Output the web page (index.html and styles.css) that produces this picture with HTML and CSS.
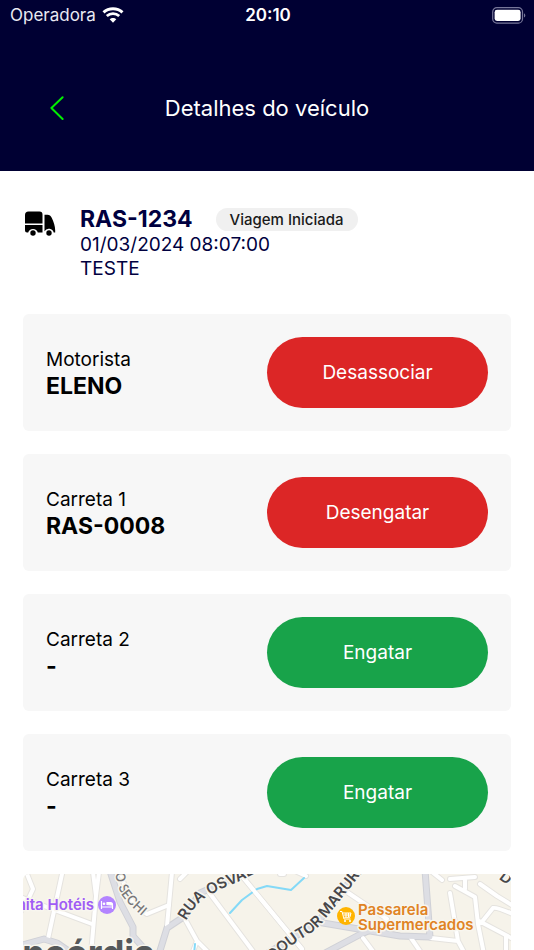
FILE: index.html
```html
<!DOCTYPE html>
<html lang="pt-BR">
<head>
<meta charset="utf-8">
<meta name="viewport" content="width=device-width, initial-scale=1">
<title>Detalhes do veículo</title>
<link rel="stylesheet" href="styles.css">
</head>
<body>
<header class="header">
  <div class="status">
    <div class="carrier">
      <span>Operadora</span>
      <svg class="wifi" viewBox="0 0 22 16" aria-hidden="true">
        <path d="M1.500 5.300C6.800.5 15.200.5 20.500 5.300" fill="none" stroke="#fff" stroke-width="3"/>
        <path d="M4.800 9c3.500-3.200 8.900-3.200 12.400 0" fill="none" stroke="#fff" stroke-width="2.800"/>
        <path d="M7.700 12.300c1.900-1.900 4.700-1.900 6.600 0L11 15.700z" fill="#fff"/>
      </svg>
    </div>
    <time class="clock">20:10</time>
    <svg class="battery" viewBox="0 0 34 17" aria-hidden="true">
      <rect x=".7" y=".7" width="29.800" height="15.400" rx="4.200" fill="none" stroke="#77779a" stroke-width="1.200"/>
      <rect x="2.600" y="2.800" width="26" height="11.200" rx="2.400" fill="#fff"/>
      <path d="M32 6.200c1.800.8 1.800 3.600 0 4.400z" fill="#77779a"/>
    </svg>
  </div>
  <div class="navbar">
    <button class="back" type="button" aria-label="Voltar">
      <svg viewBox="0 0 14 24" aria-hidden="true"><path d="M12.600 1.200 1.400 12l11.200 11" fill="none" stroke="#00f000" stroke-width="2" stroke-linecap="round" stroke-linejoin="round"/></svg>
    </button>
    <h1 class="title">Detalhes do veículo</h1>
  </div>
</header>
<main class="content">
  <section class="vehicle">
    <svg class="truck" viewBox="0 0 31 26" aria-hidden="true">
      <path d="M3.500.5h11a3 3 0 0 1 3 3v9H0V4A3.500 3.500 0 0 1 3.500.5z"/>
      <path d="M0 14h17.500v7.500H12.800a5 5 0 0 0-9.600 0H2a2 2 0 0 1-2-2z"/>
      <path d="M19.500 3.800h3c2 0 3.300 1 4.200 3 1.900 4 3.500 8.500 3.500 12.700v2h-1.500a5 5 0 0 0-9.200-1.300z"/>
      <circle cx="8" cy="22" r="2.700"/><circle cx="24" cy="22" r="2.700"/>
    </svg>
    <div class="vehicle-info">
      <div class="plate-row">
        <h2 class="plate">RAS-1234</h2>
        <span class="badge">Viagem Iniciada</span>
      </div>
      <p class="meta">01/03/2024 08:07:00</p>
      <p class="meta">TESTE</p>
    </div>
  </section>
  <section class="card">
    <div class="card-info"><p class="label">Motorista</p><p class="value">ELENO</p></div>
    <button class="action danger" type="button">Desassociar</button>
  </section>
  <section class="card">
    <div class="card-info"><p class="label">Carreta 1</p><p class="value">RAS-0008</p></div>
    <button class="action danger" type="button">Desengatar</button>
  </section>
  <section class="card">
    <div class="card-info"><p class="label">Carreta 2</p><p class="value">-</p></div>
    <button class="action success" type="button">Engatar</button>
  </section>
  <section class="card">
    <div class="card-info"><p class="label">Carreta 3</p><p class="value">-</p></div>
    <button class="action success" type="button">Engatar</button>
  </section>
  <section class="map" aria-label="Mapa">
    <svg viewBox="0 0 488 77" preserveAspectRatio="xMidYMin slice">
      <defs>
        <g id="minor">
          <path d="M4 0 10 15 4 28-4 40"/>
          <path d="M39 0 25 65"/>
          <path d="M0 24 69 50"/>
          <path d="M70-2 73 22 68 80M76-2 73 22"/>
          <path d="M98-4Q102 28 124 40L146 31"/>
          <path d="M149-2 144 52"/>
          <path d="M164-2 157 5"/>
          <path d="M185 17 232 80"/>
          <path d="M219 2 279 75"/>
          <path d="M162 45 174 67 169 80M174 67 187 80"/>
          <path d="M270-4 283 2M257 0h4"/>
          <path d="M318 14 364 45 350 57"/>
          <path d="M409-2 419 6"/>
          <path d="M427 5 452 3M442 5v10"/>
          <path d="M432 12 452 23 455 50 461 80"/>
          <path d="M457 10 474 22 492 33"/>
          <path d="M458 49 470 34Q474 33 492 41"/>
          <path d="M456 47 492 66M483 62v18"/>
          <path d="M427 19 435 67 442 80M408 64 435 67"/>
          <path d="M388 64 399 80M340 64 352 80"/>
        </g>
        <g id="major">
          <path d="M87-3 97 28 110 53V62L126 80"/>
          <path d="M-4 72 21 65 34 69 50 80"/>
          <path d="M136 80 144 54 162 42 177 19 204 7 222-3"/>
          <path d="M240 82 294 49 336-4"/>
          <path d="M294 48 377 62 407 63 402-4"/>
          <path d="M302 79 336 61 352 54"/>
        </g>
        <path id="osvaldo" d="M163 47Q172 31 182 24 198 14 215 8L250-10"/>
        <path id="maruri" d="M250 87Q262 76 278 65 296 55 303 44L350-15"/>
        <path id="sechi" d="M86-25 92-2Q95 14 100 23 107 32 119 42"/>
      </defs>
      <rect width="488" height="77" fill="#f6f3ea"/>
      <use href="#minor" class="edge"/>
      <use href="#major" class="major-edge"/>
      <use href="#minor" class="road"/>
      <use href="#major" class="major-road"/>
      <path class="river" d="M207 39 219 26 234 15 244 12 268 16 281 4M172 70 171 80"/>
      <path class="over" d="M219 2 279 75"/>
      <text class="street"><textPath href="#osvaldo">RUA OSVALDO</textPath></text>
      <text class="street"><textPath href="#maruri">DOUTOR MARURI</textPath></text>
      <text class="street small" text-anchor="end"><textPath href="#sechi" startOffset="100%">RO SECHI</textPath></text>
      <text class="street" transform="translate(467 -2) rotate(38)">- D</text>
      <text class="place hotel" x="71" y="36" text-anchor="end">Bonita Hotéis</text>
      <circle cx="84" cy="31" r="9" fill="#b384ff"/>
      <path d="M78.500 27v8M78.500 33h11M89.500 31v4M84 30.500v-2h3.500q2 0 2 2v.5z" fill="#fff" stroke="#fff" stroke-width="1.200"/>
      <circle cx="81" cy="29.800" r="1.300" fill="#fff"/>
      <circle cx="323" cy="42" r="9" fill="#ffb400"/>
      <path d="M317 37.500h2l2 7.500h6.500M320 39h8l-1.200 4.300h-5.500M323 39v4M325.500 39v4M320.500 41h7" fill="none" stroke="#fff" stroke-width="1"/>
      <circle cx="322" cy="47" r="1" fill="#fff"/><circle cx="327" cy="47" r="1" fill="#fff"/>
      <text class="place shop" x="335" y="41">Passarela</text>
      <text class="place shop" x="335" y="56">Supermercados</text>
      <text class="city" x="132" y="92" text-anchor="end">Concórdia</text>
    </svg>
  </section>
</main>
</body>
</html>
```
FILE: styles.css
```css
* { box-sizing: border-box; margin: 0; padding: 0; }

body {
  display: flex;
  flex-direction: column;
  height: 100vh;
  min-height: 700px;
  background: #fff;
  color: #000;
  font-family: Inter, "Liberation Sans", sans-serif;
}

.header {
  background: #000033;
  color: #fff;
  padding-bottom: 39px;
}

.status {
  display: grid;
  grid-template-columns: 1fr auto 1fr;
  align-items: center;
  height: 30px;
  padding: 0 8px 0 10px;
  font-size: 17px;
  line-height: 20px;
}

.carrier { display: flex; align-items: center; gap: 6px; color: #e9e9f2; }
.wifi { width: 22px; height: 16px; }
.clock { font-weight: 600; }
.battery { width: 34px; height: 17px; justify-self: end; }

.navbar {
  display: grid;
  grid-template-columns: 1fr auto 1fr;
  align-items: center;
  margin-top: 54px;
  height: 48px;
  padding: 0 33px;
}

.back {
  display: flex;
  align-items: center;
  justify-content: center;
  width: 48px;
  height: 48px;
  border: 0;
  background: none;
  cursor: pointer;
}

.back svg { width: 14px; height: 24px; }
.title { font-size: 22px; line-height: 28px; font-weight: 400; }

.content {
  flex: 1;
  min-height: 0;
  display: flex;
  flex-direction: column;
  gap: 23px;
  padding: 35px 23px 0;
}

.vehicle { display: flex; gap: 24px; padding: 0 2px; margin-bottom: 10px; color: #000040; }
.truck { width: 31px; height: 26px; margin-top: 5px; fill: #000; }
.plate-row { display: flex; align-items: center; gap: 23px; }
.plate { font-size: 23px; line-height: 27px; font-weight: 700; }

.badge {
  padding: 0 14px;
  border-radius: 12px;
  background: #f0f0f0;
  color: #1a1a1a;
  font-size: 15px;
  line-height: 23px;
  font-weight: 500;
}

.meta { font-size: 19px; line-height: 24px; }

.card {
  display: flex;
  align-items: center;
  justify-content: space-between;
  flex-shrink: 0;
  padding: 23px;
  border-radius: 6px;
  background: #f7f7f7;
}

.label { font-size: 19px; line-height: 26px; }
.value { font-size: 23px; line-height: 26px; font-weight: 700; }

.action {
  width: 50%;
  height: 71px;
  border: 0;
  border-radius: 36px;
  color: #fff;
  font-family: inherit;
  font-size: 19px;
  cursor: pointer;
}

.danger { background: #dc2626; }
.success { background: #18a34a; }

.map {
  flex: 1;
  min-height: 0;
  overflow: hidden;
  border-radius: 6px 6px 0 0;
}

.map svg { display: block; width: 100%; height: 100%; }

.edge, .road, .major-edge, .major-road, .river, .over {
  fill: none;
  stroke-linejoin: round;
  stroke-linecap: round;
}

.edge { stroke: #e5e3df; stroke-width: 6px; }
.road { stroke: #fff; stroke-width: 4px; }
.major-edge { stroke: #cfd0d6; stroke-width: 7px; }
.major-road { stroke: #dddee4; stroke-width: 5px; }
.river { stroke: #84d9f7; stroke-width: 2px; }
.over { stroke: #fff; stroke-width: 4px; }

.street, .place, .city {
  paint-order: stroke;
  stroke: #f8f6ef;
  stroke-width: 3px;
  stroke-linejoin: round;
}

.street { fill: #47474a; font-size: 15px; font-weight: 600; }
.small { fill: #77777a; font-size: 13px; font-weight: 500; }
.place { font-size: 15px; font-weight: 600; }
.hotel { fill: #a05cf5; }
.shop { fill: #e08324; }
.city { fill: #55585a; font-size: 36px; font-weight: 700; }
```
